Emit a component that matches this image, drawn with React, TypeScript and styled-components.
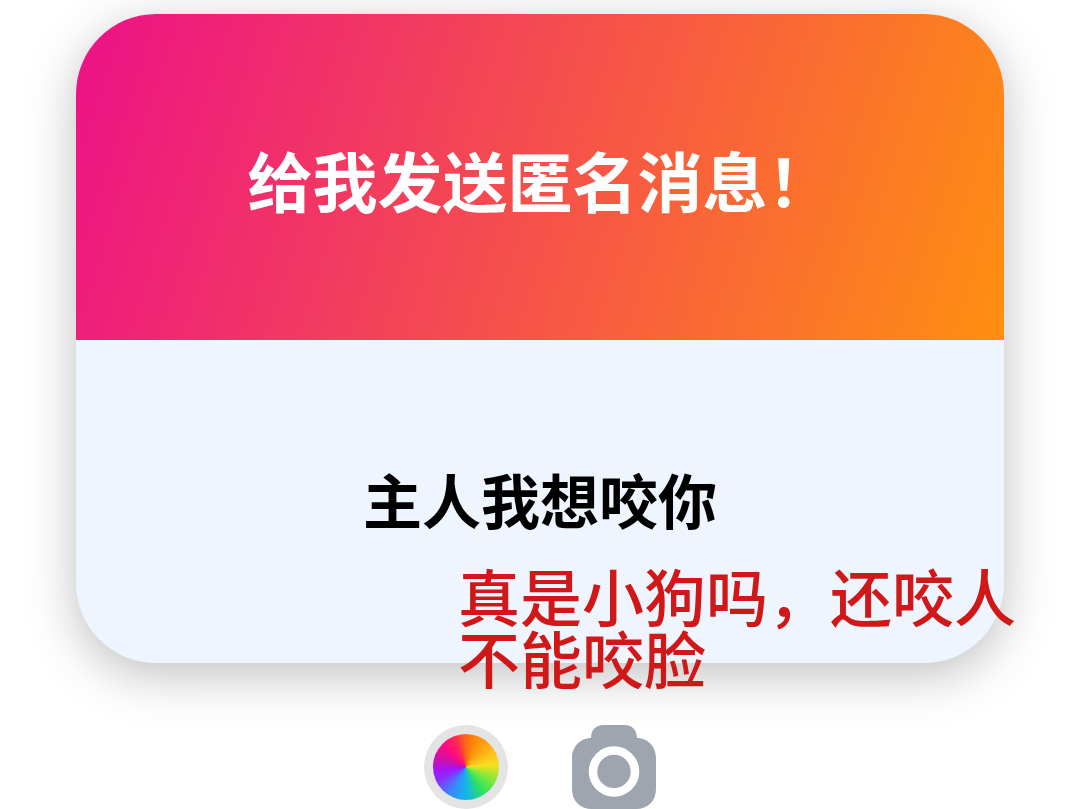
import React from 'react';
import styled, { createGlobalStyle } from 'styled-components';

const GlobalStyle = createGlobalStyle`
  * { box-sizing: border-box; }
  body {
    margin: 0;
    background: #ffffff;
    font-family: "Noto Sans CJK SC", sans-serif;
    overflow: hidden;
  }
`;

const Page = styled.main`
  display: flex;
  flex-direction: column;
  gap: 62px;
  padding: 14px 76px 0;
`;

const CardArea = styled.div`
  position: relative;
`;

const Card = styled.article`
  border-radius: 80px;
  overflow: hidden;
  background: #eef5ff;
  box-shadow: 0 12px 50px rgba(0, 0, 0, 0.25);
  text-align: center;
`;

const CardHeader = styled.header`
  padding: 125px 32px 121px;
  background: linear-gradient(108deg, #ec1187 0%, #ff8f10 100%);
`;

const Title = styled.h1`
  margin: 0;
  color: #ffffff;
  font-size: 65px;
  line-height: 80px;
  font-weight: 700;
`;

const Message = styled.p`
  margin: 0;
  padding: 119px 32px 124px;
  color: #000000;
  font-size: 59px;
  line-height: 80px;
  font-weight: 700;
`;

const Note = styled.p`
  position: absolute;
  right: -12px;
  bottom: -25px;
  margin: 0;
  color: #d01818;
  font-size: 62px;
  line-height: 62px;
  font-weight: 500;
  white-space: nowrap;
`;

const Toolbar = styled.div`
  display: flex;
  justify-content: center;
  gap: 64px;
`;

const ToolButton = styled.button`
  display: flex;
  width: 84px;
  height: 84px;
  padding: 0;
  border: 0;
  background: none;
  cursor: pointer;
`;

const ColorButton = styled(ToolButton)`
  align-items: center;
  justify-content: center;
  border-radius: 50%;
  background: #e4e4e4;
`;

const Wheel = styled.span`
  width: 66px;
  height: 66px;
  border-radius: 50%;
  background: conic-gradient(
    #ff6a10 0deg,
    #ff8a08 20deg,
    #ffa814 45deg,
    #f8e021 85deg,
    #8fe835 112deg,
    #2fe35c 145deg,
    #12b5ea 180deg,
    #3b86fb 212deg,
    #8a2cff 245deg,
    #a812f0 265deg,
    #d010a8 288deg,
    #ff0a80 315deg,
    #ff2a50 340deg,
    #ff6a10 360deg
  );
`;

function CameraIcon() {
  return (
    <svg width="84" height="84" viewBox="0 0 84 84" aria-hidden="true">
      <path
        fill="#9fa5af"
        d="M31 0H53C60 0 65 5 65 13C76 13 84 22 84 33V64C84 76 76 84 64 84H20C8 84 0 76 0 64V33C0 22 8 13 19 13C19 5 24 0 31 0Z"
      />
      <circle cx="42" cy="46.5" r="21" fill="none" stroke="#ffffff" strokeWidth="8.5" />
    </svg>
  );
}

export default function App() {
  return (
    <>
      <GlobalStyle />
      <Page>
        <CardArea>
          <Card>
            <CardHeader>
              <Title>给我发送匿名消息！</Title>
            </CardHeader>
            <Message>主人我想咬你</Message>
          </Card>
          <Note>
            真是小狗吗，还咬人
            <br />
            不能咬脸
          </Note>
        </CardArea>
        <Toolbar>
          <ColorButton type="button" aria-label="选择颜色">
            <Wheel />
          </ColorButton>
          <ToolButton type="button" aria-label="相机">
            <CameraIcon />
          </ToolButton>
        </Toolbar>
      </Page>
    </>
  );
}
